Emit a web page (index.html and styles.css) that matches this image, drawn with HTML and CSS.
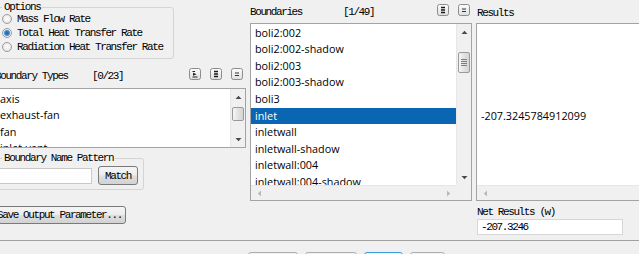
FILE: index.html
```html
<!DOCTYPE html>
<html>
<head>
<meta charset="utf-8">
<title>Flux Reports</title>
<link rel="stylesheet" href="styles.css">
</head>
<body>
<div class="dialog">
  <div class="main">
    <div class="col col-left">
      <fieldset class="group options">
        <legend>Options</legend>
        <label class="radio"><span class="rb"></span><span class="mono">Mass Flow Rate</span></label>
        <label class="radio"><span class="rb on"></span><span class="mono">Total Heat Transfer Rate</span></label>
        <label class="radio"><span class="rb"></span><span class="mono">Radiation Heat Transfer Rate</span></label>
      </fieldset>

      <div class="head head-types">
        <span class="mono title title-types">Boundary Types</span>
        <span class="mono">[0/23]</span>
        <span class="tools">
          <span class="tb"><svg width="12" height="12" viewBox="0 0 12 12"><defs><linearGradient id="g1" x1="0" y1="0" x2="0" y2="1"><stop offset="0" stop-color="#fdfdfd"/><stop offset="1" stop-color="#dedede"/></linearGradient></defs><rect x="0.5" y="0.5" width="11" height="11" rx="2" fill="url(#g1)" stroke="#8c8c8c"/><path d="M3.5 3.5H6M3.5 9H8.5" stroke="#222" stroke-width="1"/><path d="M4 4.8L7.6 6.3L4 7.8Z" fill="#222"/></svg></span>
          <span class="tb"><svg width="12" height="12" viewBox="0 0 12 12"><rect x="0.5" y="0.5" width="11" height="11" rx="2" fill="url(#g1)" stroke="#8c8c8c"/><path d="M4 3.5H8M4 6H8M4 8.5H8" stroke="#1a1a1a" stroke-width="1.3"/></svg></span>
          <span class="tb"><svg width="12" height="12" viewBox="0 0 12 12"><rect x="0.5" y="0.5" width="11" height="11" rx="2" fill="url(#g1)" stroke="#8c8c8c"/><path d="M4 5H8M4 7.5H8" stroke="#333" stroke-width="1"/></svg></span>
        </span>
      </div>

      <div class="listbox types">
        <ul class="items items-types">
          <li>axis</li>
          <li>exhaust-fan</li>
          <li>fan</li>
          <li>inlet-vent</li>
        </ul>
        <div class="vscroll">
          <div class="sb-btn"><svg width="7" height="4" viewBox="0 0 7 4"><path d="M0.5 4L3.5 0.8L6.5 4Z"/></svg></div>
          <div class="sb-track"><div class="thumb thumb-types"></div></div>
          <div class="sb-btn"><svg width="7" height="4" viewBox="0 0 7 4"><path d="M0.5 0L3.5 3.2L6.5 0Z"/></svg></div>
        </div>
      </div>

      <fieldset class="group pattern">
        <legend>Boundary Name Pattern</legend>
        <div class="pattern-row">
          <span class="tbox pattern-box"></span>
          <button class="btn match mono">Match</button>
        </div>
      </fieldset>

      <button class="btn save mono">Save Output Parameter...</button>
    </div>

    <div class="col col-mid">
      <div class="head head-mid">
        <span class="mono title title-mid">Boundaries</span>
        <span class="mono">[1/49]</span>
        <span class="tools tools-mid">
          <span class="tb"><svg width="12" height="12" viewBox="0 0 12 12"><rect x="0.5" y="0.5" width="11" height="11" rx="2" fill="url(#g1)" stroke="#8c8c8c"/><path d="M4 3.5H8M4 6H8M4 8.5H8" stroke="#1a1a1a" stroke-width="1.3"/></svg></span>
          <span class="tb"><svg width="12" height="12" viewBox="0 0 12 12"><rect x="0.5" y="0.5" width="11" height="11" rx="2" fill="url(#g1)" stroke="#8c8c8c"/><path d="M4 5H8M4 7.5H8" stroke="#333" stroke-width="1"/></svg></span>
        </span>
      </div>
      <div class="listbox bounds">
        <ul class="items items-bounds">
          <li>boli2:002</li>
          <li>boli2:002-shadow</li>
          <li>boli2:003</li>
          <li>boli2:003-shadow</li>
          <li>boli3</li>
          <li class="sel">inlet</li>
          <li>inletwall</li>
          <li>inletwall-shadow</li>
          <li>inletwall:004</li>
          <li>inletwall:004-shadow</li>
        </ul>
        <div class="vscroll">
          <div class="sb-btn"><svg width="7" height="4" viewBox="0 0 7 4"><path d="M0.5 4L3.5 0.8L6.5 4Z"/></svg></div>
          <div class="sb-track"><div class="thumb thumb-mid"><span class="grip"></span></div></div>
          <div class="sb-btn"><svg width="7" height="4" viewBox="0 0 7 4"><path d="M0.5 0L3.5 3.2L6.5 0Z"/></svg></div>
        </div>
        <div class="hscroll">
          <div class="sb-btn dis"><svg width="4" height="7" viewBox="0 0 4 7"><path d="M4 0.5L0.8 3.5L4 6.5Z"/></svg></div>
          <div class="sb-htrack"></div>
          <div class="sb-btn dis"><svg width="4" height="7" viewBox="0 0 4 7"><path d="M0 0.5L3.2 3.5L0 6.5Z"/></svg></div>
        </div>
        <div class="corner"></div>
      </div>
    </div>

    <div class="col col-right">
      <div class="mono res-title">Results</div>
      <div class="listbox results">
        <ul class="items items-res">
          <li></li><li></li><li></li><li></li><li></li>
          <li>-207.3245784912099</li>
        </ul>
        <div class="hscroll">
          <div class="sb-btn dis"><svg width="4" height="7" viewBox="0 0 4 7"><path d="M4 0.5L0.8 3.5L4 6.5Z"/></svg></div>
          <div class="sb-htrack"></div>
        </div>
      </div>
      <div class="mono net-title">Net Results (w)</div>
      <div class="tbox net-box mono">-207.3246</div>
    </div>
  </div>

  <div class="footer">
    <button class="fbtn w1">Compute</button>
    <button class="fbtn w2">Write...</button>
    <button class="fbtn w3 def">Close</button>
    <button class="fbtn w4">Help</button>
  </div>
</div>
</body>
</html>
```

FILE: styles.css
```css
* { box-sizing: border-box; }
html, body { margin: 0; padding: 0; }
body {
  background: #f0f0f0;
  width: 639px;
  height: 254px;
  overflow: hidden;
  color: #000;
  font-family: "Liberation Mono", monospace;
  font-size: 11px;
}
.mono {
  font-family: "Liberation Mono", monospace;
  font-size: 11px;
  letter-spacing: -1.4px;
  line-height: 10px;
  white-space: nowrap;
}
.dialog { margin-left: -7px; width: 690px; }
.main {
  display: grid;
  grid-template-columns: 253px 222px 200px;
  column-gap: 4px;
  height: 240px;
}
.col { display: flex; flex-direction: column; min-width: 0; }

/* group boxes */
.group {
  margin: 0;
  border: 1px solid #d4d4d4;
  border-radius: 3px;
  min-width: 0;
}
.group legend {
  font-family: "Liberation Mono", monospace;
  font-size: 11px;
  letter-spacing: -1.4px;
  line-height: 10px;
  padding: 0 2px;
  white-space: nowrap;
}
.options {
  width: 181px;
  margin-top: 2px;
  padding: 0 0 4px 8px;
}
.radio { display: flex; align-items: center; height: 14px; }
.rb {
  width: 10px; height: 10px;
  border-radius: 50%;
  border: 1px solid #9d9d9d;
  background: radial-gradient(circle at 50% 45%, #ffffff 0, #f2f2f2 40%, #d9d9d9 100%);
  margin-right: 5px;
  flex: none;
}
.rb.on {
  background: radial-gradient(circle at 50% 50%, #1f5f9f 0, #3b85c8 2.2px, #7fb3e2 3px, #e6eef6 3.6px, #dcdcdc 100%);
}

/* headers */
.head { display: flex; align-items: center; }
.head-types { margin-top: 10px; height: 14px; padding-left: 2px; padding-right: 3px; }
.head-mid { height: 23px; padding-right: 2px; }
.title-types { width: 97px; }
.title-mid { width: 93px; }
.tools { margin-left: auto; display: flex; gap: 9px; align-self: flex-start; margin-top: -1px; }
.tools-mid { margin-top: 4px; }
.tb { display: block; width: 12px; height: 12px; }
.tb svg { display: block; }

/* list boxes */
.listbox {
  border: 1px solid #a3a3a3;
  background: #fff;
  display: grid;
}
.types {
  margin-top: 5px;
  height: 60px;
  grid-template-columns: 1fr 15px;
}
.bounds {
  height: 178px;
  grid-template-columns: 1fr 15px;
  grid-template-rows: 1fr 15px;
}
.results {
  height: 178px;
  grid-template-rows: 1fr 15px;
  margin-right: -20px;
}
.items {
  list-style: none;
  margin: 0;
  padding: 0;
  overflow: hidden;
  font-family: "Open Sans", sans-serif;
  font-size: 10.8px;
  min-width: 0;
}
.items li {
  height: 16.6px;
  line-height: 16.6px;
  padding-left: 4px;
  white-space: nowrap;
}
.items-types { padding-top: 1.7px; }
.items-types li { padding-left: 6px; }
.items-bounds { padding-top: 0.6px; }
.items-res { padding-top: 0.6px; }
.items li.sel { background: #0a66b3; color: #fff; }

/* scrollbars */
.vscroll {
  display: flex;
  flex-direction: column;
  background: #f0f0f0;
  border-left: 1px solid #e6e6e6;
}
.sb-btn {
  flex: none;
  width: 15px;
  height: 15px;
  display: flex;
  align-items: center;
  justify-content: center;
}
.vscroll .sb-btn { width: 14px; }
.sb-btn svg { display: block; fill: #4a4a4a; }
.sb-btn.dis svg { fill: #b9b9b9; }
.sb-track { flex: 1; padding: 0 1px; }
.thumb {
  border: 1px solid #9a9a9a;
  border-radius: 2px;
  background: linear-gradient(to right, #f6f6f6, #e2e2e2 50%, #d6d6d6);
  display: flex;
  align-items: center;
  justify-content: center;
}
.thumb-types { margin-top: 3px; height: 14px; }
.thumb-mid { margin-top: 13px; height: 21px; }
.grip {
  width: 6px;
  height: 7px;
  background: repeating-linear-gradient(to bottom, #7d7d7d 0, #7d7d7d 1px, transparent 1px, transparent 2px);
}
.hscroll {
  display: flex;
  background: #f0f0f0;
  border-top: 1px solid #e6e6e6;
}
.sb-htrack { flex: 1; }
.hscroll .sb-btn { height: 14px; }
.corner { background: #f0f0f0; }

/* pattern group */
.pattern {
  width: 151px;
  margin-top: 5px;
  padding: 3px 0 4px 3px;
}
.pattern legend { margin-left: 5px; }
.pattern-row { display: flex; align-items: center; }
.tbox {
  display: block;
  background: #fff;
  border: 1px solid #c9c9c9;
}
.pattern-box { width: 95px; height: 16px; }

.btn {
  margin: 0;
  padding: 0;
  border: 1px solid #7a7a7a;
  border-radius: 3px;
  background: linear-gradient(#f5f5f5, #ececec 48%, #dedede 52%, #d2d2d2);
  color: #000;
  font-family: "Liberation Mono", monospace;
  font-size: 11px;
  letter-spacing: -1.4px;
  line-height: 10px;
}
.match { margin-left: 6px; width: 40px; height: 19px; }
.save { margin-top: 16px; width: 133px; height: 18px; }

/* right column */
.res-title { margin-top: 8px; margin-bottom: 5px; padding-left: 1px; }
.net-title { margin-top: 6px; padding-left: 1px; }
.net-box {
  margin-top: 2px;
  margin-left: 1px;
  width: 146px;
  height: 16px;
  border-color: #d6d6d6;
  padding: 2px 0 0 3px;
}

/* footer */
.footer {
  border-top: 1px solid #a0a0a0;
  padding: 11px 0 0 255px;
  display: flex;
  gap: 7px;
}
.fbtn {
  flex: none;
  height: 23px;
  border: 1px solid #adadad;
  border-radius: 3px;
  background: linear-gradient(#f2f2f2, #e2e2e2);
  font-family: "Liberation Sans", sans-serif;
  font-size: 11px;
  padding: 0;
}
.w1 { width: 50px; }
.w2 { width: 52px; }
.w3 { width: 39px; }
.w4 { width: 35px; }
.fbtn.def { border-color: #3c9bd6; background: linear-gradient(#e8f4fc, #c4e4f7); }
```
